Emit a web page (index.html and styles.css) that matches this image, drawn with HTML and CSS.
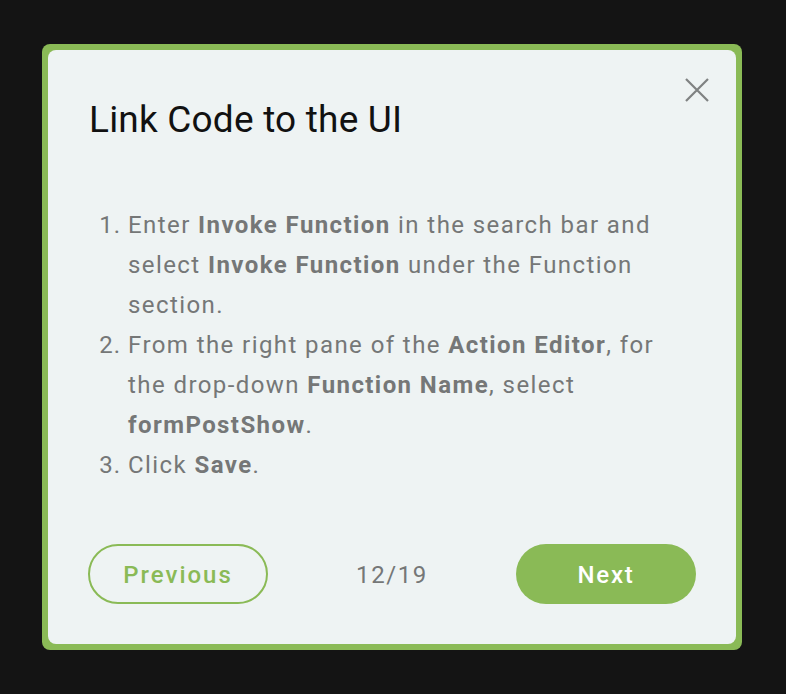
FILE: index.html
```html
<!DOCTYPE html>
<html>
<head>
<meta charset="utf-8">
<link rel="stylesheet" href="styles.css">
</head>
<body>
<div class="frame">
  <div class="panel">
    <button class="close" aria-label="Close">
      <svg width="24" height="24" viewBox="0 0 24 24"><path d="M1 1 L23 23 M23 1 L1 23" stroke="#7f8282" stroke-width="2.2" fill="none"/></svg>
    </button>
    <h1 class="title">Link Code to the UI</h1>
    <ol class="steps">
      <li>Enter <b>Invoke Function</b> in the search bar and select <b>Invoke Function</b> under the Function section.</li>
      <li>From the right pane of the <b>Action Editor</b>, for the drop-down <b>Function Name</b>, select <b>formPostShow</b>.</li>
      <li>Click <b>Save</b>.</li>
    </ol>
    <div class="footer">
      <button class="btn btn-outline">Previous</button>
      <span class="count">12/19</span>
      <button class="btn btn-fill">Next</button>
    </div>
  </div>
</div>
</body>
</html>
```
FILE: styles.css
```css
html, body {
  margin: 0;
  padding: 0;
  background: #141414;
  font-family: Roboto, "Liberation Sans", sans-serif;
}
.frame {
  box-sizing: border-box;
  margin: 44px 0 0 42px;
  width: 700px;
  height: 606px;
  background: #8aba56;
  padding: 6px;
  border-radius: 8px;
}
.panel {
  position: relative;
  box-sizing: border-box;
  height: 100%;
  background: #eef3f3;
  border-radius: 8px;
  display: flex;
  flex-direction: column;
  padding: 0 40px 40px 41px;
}
.close {
  position: absolute;
  top: 28px;
  right: 27px;
  width: 24px;
  height: 24px;
  padding: 0;
  border: 0;
  background: none;
  cursor: pointer;
}
.close svg { display: block; }
.title {
  margin: 48px 0 0 0;
  font-size: 37px;
  font-weight: 400;
  line-height: normal;
  letter-spacing: 0.2px;
  color: #111;
}
.steps {
  margin: 64px 0 0 0;
  padding: 0 0 0 39px;
  font-size: 24px;
  line-height: 40px;
  letter-spacing: 1.42px;
  color: #757777;
}
.steps li::marker {
  letter-spacing: 1px;
}
.steps b {
  font-weight: 700;
}
.footer {
  margin-top: auto;
  display: flex;
  align-items: center;
  justify-content: space-between;
  margin-left: -1px;
}
.btn {
  box-sizing: border-box;
  width: 180px;
  height: 60px;
  border-radius: 30px;
  font-family: Roboto, "Liberation Sans", sans-serif;
  font-size: 24px;
  font-weight: 500;
  cursor: pointer;
  padding: 2px 0 0 0;
}
.btn-outline {
  background: transparent;
  border: 2px solid #8aba56;
  color: #8aba56;
  letter-spacing: 2px;
}
.btn-fill {
  background: #8aba56;
  border: 0;
  color: #fff;
  letter-spacing: 1.8px;
}
.count {
  font-size: 24px;
  letter-spacing: 1.6px;
  color: #757777;
  padding-top: 2px;
}
```
